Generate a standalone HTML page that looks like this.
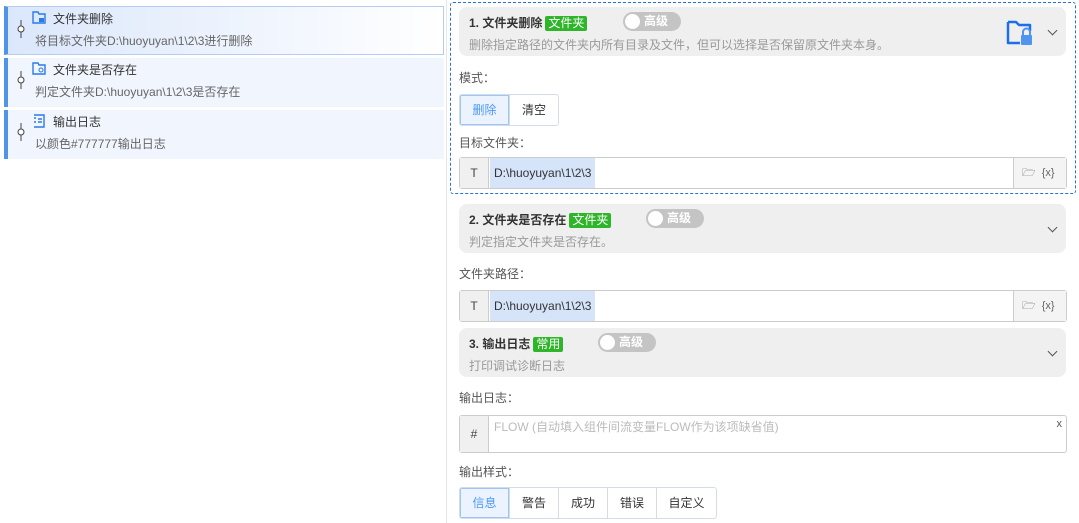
<!DOCTYPE html><html><head><meta charset="utf-8"><style>
*{box-sizing:border-box;margin:0;padding:0}
body{width:1079px;height:523px;overflow:hidden;background:#fff;font-family:"Liberation Sans","Noto Sans CJK SC",sans-serif;font-size:12px;color:#333;position:relative}
.a{position:absolute}
.item{position:absolute;left:4px;width:440px;height:49px;background:#f1f5fd;border-left:4px solid #4f94e6}
.item .t{position:absolute;left:45px;top:3px;font-size:12px;color:#333}
.item .d{position:absolute;left:27px;top:25px;font-size:12px;color:#666}
.item .pin{position:absolute;left:9px;top:13px;width:8px;height:18px}
.item .ic{position:absolute;left:24px;top:4px}
.card{position:absolute;left:459px;width:607px;height:49px;background:#efefef;border-radius:8px}
.card .t{position:absolute;left:10px;top:7px;font-weight:bold;font-size:12px;color:#333}
.card .d{position:absolute;left:10px;top:29px;color:#999;font-size:12px}
.tag{display:inline-block;background:#2fb52a;color:#fff;font-weight:normal;padding:0 3px;margin-left:3px;line-height:15px;border-radius:2px}
.sw{position:absolute;top:5px;width:58px;height:19px;border-radius:10px;background:#c4c4c4;color:#fff;font-weight:bold;font-size:12px;line-height:19px;padding-left:21px}
.sw:before{content:"";position:absolute;left:2px;top:2px;width:15px;height:15px;border-radius:50%;background:#fff}
.chev{position:absolute;right:10px;top:20px;width:7px;height:7px;border-right:1.3px solid #555;border-bottom:1.3px solid #555;transform:rotate(45deg)}
.lbl{position:absolute;left:459px;color:#555;font-size:12px}
.inp{position:absolute;left:459px;width:608px;height:32px;border:1px solid #ccc;border-radius:3px;background:#fff}
.inp .p{position:absolute;left:0;top:0;width:29px;height:30px;background:#f0f0f0;border-right:1px solid #ccc;text-align:center;line-height:30px;color:#444}
.inp .v{position:absolute;left:30px;top:0;height:30px;background:#d6e4fa;line-height:30px;padding:0 4px;color:#333}
.inp .s{position:absolute;right:0;top:0;width:53px;height:30px;background:#f4f4f4;border-left:1px solid #ccc;color:#666;font-size:11px;line-height:30px;padding-left:8px}
.bg{position:absolute;left:459px;display:flex;height:32px;border:1px solid #d6dce6;border-radius:3px;overflow:hidden}
.bg div{width:49px;text-align:center;line-height:30px;border-left:1px solid #d6dce6;color:#333}
.bg div:first-child{border-left:none;background:#eaf3ff;color:#4f98f5;box-shadow:inset 0 0 0 1px #9cc6f5}
</style></head><body>
<div class="a" style="left:446px;top:0;width:1px;height:523px;background:#e6e6e6"></div>

<div class="item" style="top:6px;background:linear-gradient(90deg,#dbe7fb,#fff);border:1px solid #b3cdf5;border-left:4px solid #4f94e6">
<svg class="pin" viewBox="0 0 8 18"><line x1="4" y1="0" x2="4" y2="18" stroke="#444"/><circle cx="4" cy="9" r="3" fill="#fff" stroke="#444"/></svg>
<svg class="ic" width="14" height="13" viewBox="0 0 14 13"><path d="M1 1h5l1 2h6v9H1z" fill="none" stroke="#2a7ae8" stroke-width="1.4"/><rect x="7" y="7" width="5" height="4" fill="#2a7ae8"/></svg>
<div class="t">文件夹删除</div><div class="d">将目标文件夹D:\huoyuyan\1\2\3进行删除</div></div>
<div class="item" style="top:58px">
<svg class="pin" viewBox="0 0 8 18"><line x1="4" y1="0" x2="4" y2="18" stroke="#444"/><circle cx="4" cy="9" r="3" fill="#fff" stroke="#444"/></svg>
<svg class="ic" width="14" height="13" viewBox="0 0 14 13"><path d="M1 1h5l1 2h6v9H1z" fill="none" stroke="#2a7ae8" stroke-width="1.4"/><circle cx="9" cy="8" r="2" fill="none" stroke="#2a7ae8"/></svg>
<div class="t">文件夹是否存在</div><div class="d">判定文件夹D:\huoyuyan\1\2\3是否存在</div></div>
<div class="item" style="top:110px">
<svg class="pin" viewBox="0 0 8 18"><line x1="4" y1="0" x2="4" y2="18" stroke="#444"/><circle cx="4" cy="9" r="3" fill="#fff" stroke="#444"/></svg>
<svg class="ic" width="14" height="14" viewBox="0 0 14 14"><path d="M2 1h10v12H2M2 4h2M2 8h2M6 5h4M6 8h4" fill="none" stroke="#2a7ae8" stroke-width="1.4"/></svg>
<div class="t">输出日志</div><div class="d">以颜色#777777输出日志</div></div>

<div class="a" style="left:450px;top:2px;width:626px;height:192px;border:1px dashed #2a6fe0;border-radius:3px"></div>
<div class="card" style="top:7px"><div class="t">1. 文件夹删除<span class="tag">文件夹</span></div><div class="sw" style="left:164px">高级</div><div class="d">删除指定路径的文件夹内所有目录及文件，但可以选择是否保留原文件夹本身。</div>
<svg class="a" style="left:546px;top:10px" width="30" height="30" viewBox="0 0 30 30"><path d="M3 5h8l3 3h11v6M3 5v21h12" fill="none" stroke="#1c6fe8" stroke-width="2.5" stroke-linejoin="round"/><rect x="16" y="18" width="11" height="10" rx="1" fill="#4f94ee"/><path d="M18 18v-3a3.5 3.5 0 0 1 7 0v3" fill="none" stroke="#4f94ee" stroke-width="2"/></svg>
<div class="chev"></div></div>
<div class="lbl" style="top:69px">模式：</div>
<div class="bg" style="top:94px"><div>删除</div><div>清空</div></div>
<div class="lbl" style="top:134px">目标文件夹：</div>
<div class="inp" style="top:157px"><div class="p">T</div><div class="v">D:\huoyuyan\1\2\3</div><div class="s">🗁 &nbsp;{x}</div></div>

<div class="card" style="top:204px"><div class="t">2. 文件夹是否存在<span class="tag">文件夹</span></div><div class="sw" style="left:187px">高级</div><div class="d">判定指定文件夹是否存在。</div><div class="chev"></div></div>
<div class="lbl" style="top:265px">文件夹路径：</div>
<div class="inp" style="top:290px"><div class="p">T</div><div class="v">D:\huoyuyan\1\2\3</div><div class="s">🗁 &nbsp;{x}</div></div>

<div class="card" style="top:328px"><div class="t">3. 输出日志<span class="tag">常用</span></div><div class="sw" style="left:139px">高级</div><div class="d">打印调试诊断日志</div><div class="chev"></div></div>
<div class="lbl" style="top:389px">输出日志：</div>
<div class="inp" style="top:415px;height:38px"><div class="p" style="height:36px;line-height:36px">#</div><div class="a" style="left:34px;top:2px;color:#bbb">FLOW (自动填入组件间流变量FLOW作为该项缺省值)</div><div class="a" style="right:4px;top:2px;color:#555;font-size:11px">x</div></div>
<div class="lbl" style="top:463px">输出样式：</div>
<div class="bg" style="top:487px"><div>信息</div><div>警告</div><div>成功</div><div>错误</div><div style="width:60px">自定义</div></div>
</body></html>
